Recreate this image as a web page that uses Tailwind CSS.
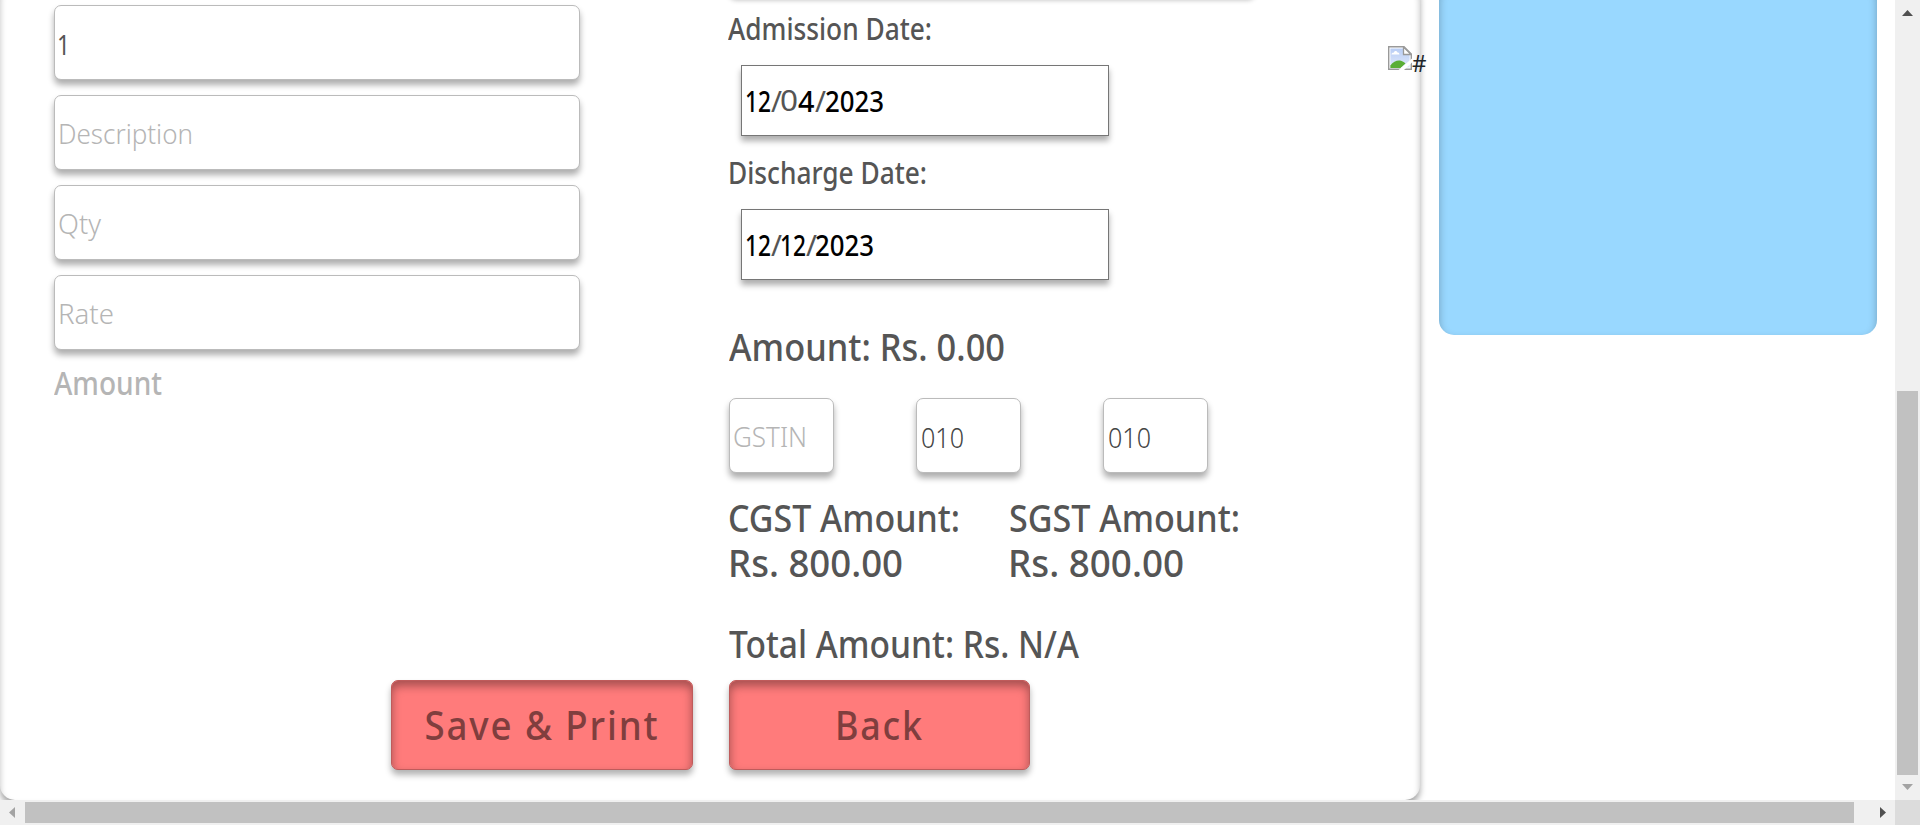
<!DOCTYPE html>
<html lang="en">
<head>
<meta charset="utf-8">
<title>Billing</title>
<script src="https://cdn.jsdelivr.net/npm/@tailwindcss/browser@4"></script>
</head>
<body class="h-[825px] w-[1920px] overflow-hidden bg-white font-['Noto_Sans','Open_Sans',sans-serif] text-[#555]">
<div class="grid h-[825px] grid-cols-[1895px_25px] grid-rows-[800px_25px]">

  <!-- page viewport -->
  <main class="flex overflow-hidden">
    <section class="relative -mt-5 flex h-[820px] w-[1420px] shrink-0 rounded-[15px] pt-5 shadow-[0_5px_6px_rgba(0,0,0,0.35),inset_0_5px_6px_rgba(0,0,0,0.25)]">

      <!-- item column -->
      <div class="flex w-[693px] shrink-0 flex-col pl-[54px] pt-[5px]">
        <div class="flex flex-col gap-[15px]">
          <div class="flex h-[75px] w-[526px] items-center rounded-[7px] border border-[#bbb] bg-white pl-[2px] pt-0.5 text-[28px] shadow-[0_5px_6px_rgba(0,0,0,0.32)]"><span data-w="13" class="inline-block origin-left whitespace-nowrap">1</span></div>
          <div class="flex h-[75px] w-[526px] items-center rounded-[7px] border border-[#bbb] bg-white pl-[3px] pt-1 text-[27px] font-light text-[#b5b5b5] shadow-[0_5px_6px_rgba(0,0,0,0.32)]"><span data-w="135" class="inline-block origin-left whitespace-nowrap">Description</span></div>
          <div class="flex h-[75px] w-[526px] items-center rounded-[7px] border border-[#bbb] bg-white pl-[3px] pt-1 text-[27px] font-light text-[#b5b5b5] shadow-[0_5px_6px_rgba(0,0,0,0.32)]"><span data-w="43" class="inline-block origin-left whitespace-nowrap">Qty</span></div>
          <div class="flex h-[75px] w-[526px] items-center rounded-[7px] border border-[#bbb] bg-white pl-[3px] pt-1 text-[27px] font-light text-[#b5b5b5] shadow-[0_5px_6px_rgba(0,0,0,0.32)]"><span data-w="56" class="inline-block origin-left whitespace-nowrap">Rate</span></div>
        </div>
        <div class="mt-[13px] text-[32px] font-medium leading-[40px] text-[#b5b5b5]"><span data-w="108" class="inline-block origin-left whitespace-nowrap">Amount</span></div>
        <button class="mt-[277px] h-[90px] w-[302px] self-end rounded-[7px] border border-[#bf5b5b] bg-[#ff7b7b] pt-px text-[39px] font-medium text-[#803e3e] shadow-[0_5px_6px_rgba(0,0,0,0.3),inset_0_5px_10px_rgba(0,0,0,0.35)]"><span data-w="235" class="-mx-4 inline-block origin-center whitespace-nowrap tracking-[2px]">Save &amp; Print</span></button>
      </div>

      <!-- billing column -->
      <div class="ml-9 flex w-[526px] shrink-0 flex-col">
        <div class="-mt-[80px] h-[75px] shrink-0 rounded-[7px] shadow-[0_5px_5px_rgba(0,0,0,0.27)]"></div>
        <div class="mt-[14px] text-[30px] font-medium leading-[40px]"><span data-w="204" class="-ml-px inline-block origin-left whitespace-nowrap">Admission Date:</span></div>
        <div class="ml-3 mt-4 flex h-[71px] w-[368px] items-center border border-[#767676] bg-white pl-[3px] pt-px text-[29px] font-medium text-black shadow-[0_5px_6px_rgba(0,0,0,0.32)]">
          <span data-w="26" class="inline-block w-[26px] origin-left whitespace-nowrap">12</span><span data-w="11" class="inline-block w-[9px] origin-left font-normal text-[#555]">/</span><span data-w="18" class="-mt-[2px] inline-block w-[18px] origin-left font-normal text-[#555]">0</span><span data-w="16.5" class="inline-block w-[17px] origin-left">4</span><span data-w="11" class="inline-block w-[10px] origin-left font-normal text-[#555]">/</span><span data-w="59" class="inline-block w-[60px] origin-left whitespace-nowrap">2023</span>
        </div>
        <div class="mt-[17px] text-[30px] font-medium leading-[40px]"><span data-w="199" class="-ml-px inline-block origin-left whitespace-nowrap">Discharge Date:</span></div>
        <div class="ml-3 mt-4 flex h-[71px] w-[368px] items-center border border-[#767676] bg-white pl-[3px] pt-px text-[29px] font-medium text-black shadow-[0_5px_6px_rgba(0,0,0,0.32)]">
          <span data-w="26" class="inline-block w-[26px] origin-left whitespace-nowrap">12</span><span data-w="11" class="inline-block w-[9px] origin-left font-normal text-[#555]">/</span><span data-w="26" class="inline-block w-[26px] origin-left whitespace-nowrap">12</span><span data-w="11" class="inline-block w-[9px] origin-left font-normal text-[#555]">/</span><span data-w="59" class="inline-block w-[60px] origin-left whitespace-nowrap">2023</span>
        </div>
        <div class="mt-[43px] text-[38px] font-medium leading-[46px]"><span data-w="276" class="inline-block origin-left whitespace-nowrap">Amount: Rs. 0.00</span></div>
        <div class="mt-[29px] flex gap-[82.5px]">
          <div class="flex h-[75px] w-[104.5px] items-center rounded-[7px] border border-[#bbb] bg-white pl-[3px] pt-1 text-[27px] font-light text-[#b5b5b5] shadow-[0_5px_6px_rgba(0,0,0,0.32)]"><span data-w="74" class="inline-block origin-left whitespace-nowrap">GSTIN</span></div>
          <div class="flex h-[75px] w-[104.5px] items-center rounded-[7px] border border-[#bbb] bg-white pl-[4px] pt-[3px] text-[28px] font-light text-[#444] shadow-[0_5px_6px_rgba(0,0,0,0.32)]"><span data-w="43" class="inline-block origin-left whitespace-nowrap">010</span></div>
          <div class="flex h-[75px] w-[104.5px] items-center rounded-[7px] border border-[#bbb] bg-white pl-[4px] pt-[3px] text-[28px] font-light text-[#444] shadow-[0_5px_6px_rgba(0,0,0,0.32)]"><span data-w="43" class="inline-block origin-left whitespace-nowrap">010</span></div>
        </div>
        <div class="mt-[22px] grid grid-cols-[280px_246px] text-[38px] font-medium leading-[45px]">
          <div class="-ml-px"><span data-w="232" class="inline-block origin-left whitespace-nowrap">CGST Amount:</span></div>
          <div><span data-w="231" class="inline-block origin-left whitespace-nowrap">SGST Amount:</span></div>
          <div class="-ml-px"><span data-w="175" class="inline-block origin-left whitespace-nowrap">Rs. 800.00</span></div>
          <div class="-ml-px"><span data-w="176" class="inline-block origin-left whitespace-nowrap">Rs. 800.00</span></div>
        </div>
        <div class="mt-9 text-[38px] font-medium leading-[45px]"><span data-w="350" class="inline-block origin-left whitespace-nowrap">Total Amount: Rs. N/A</span></div>
        <button class="mt-[14px] h-[90px] w-[301px] rounded-[7px] border border-[#bf5b5b] bg-[#ff7b7b] pt-px text-[39px] font-medium text-[#803e3e] shadow-[0_5px_6px_rgba(0,0,0,0.3),inset_0_5px_10px_rgba(0,0,0,0.35)]"><span data-w="89" class="inline-block origin-center whitespace-nowrap tracking-[2px]">Back</span></button>
      </div>

      <!-- missing image with its alt text, spilling over the panel edge -->
      <div class="absolute left-[1388px] top-[66px] flex items-start text-[#212529]">
        <svg class="h-6 w-6" viewBox="0 0 24 24" fill="none">
          <defs><linearGradient id="sky" x1="0" y1="0" x2="0" y2="1"><stop offset="0" stop-color="#b8cdf5"/><stop offset="1" stop-color="#e0e9fb"/></linearGradient></defs>
          <path d="M.7.7H16L23.3 8v15.300H.7z" fill="#fff" stroke="#999" stroke-width="1.4"/>
          <path d="M2.400 2.400H15V9h6.600v12.600H2.400z" fill="url(#sky)"/>
          <path d="M3.500 8.500c0-1.400 1.200-2 2.200-1.700C6.300 4.500 9 4.600 9.400 6.600c1.500-.2 2 .9 2 1.900z" fill="#fff"/>
          <path d="M2.400 22v-2.500C5 15.500 9 14 12 14.500c2.500.5 4 1.500 5.500 3L12.500 22z" fill="#5aae35"/>
          <path d="M15.500 1v7.500H23z" fill="#fff" stroke="#999" stroke-width="1.300"/>
          <path d="M24.500 12v4L15.500 24.500H10z" fill="#fff"/>
        </svg>
        <span data-w="14.500" class="mt-px inline-block origin-left text-[24px] leading-[32px]">#</span>
      </div>
    </section>

    <aside class="-mt-5 ml-[19px] h-[355px] w-[438px] shrink-0 rounded-[15px] bg-[#99d8ff] shadow-[inset_0_5px_8px_rgba(0,0,0,0.28)]"></aside>
  </main>

  <!-- vertical scrollbar -->
  <div class="flex flex-col items-center bg-[#f0f0f0]">
    <svg class="mt-[10px] h-[6px] w-[11px]" viewBox="0 0 11 6"><path d="M0 6L5.500 0L11 6z" fill="#505050"/></svg>
    <div class="mt-[375px] h-[384px] w-[21px] bg-[#c1c1c1]"></div>
    <svg class="mt-[9px] h-[6px] w-[11px]" viewBox="0 0 11 6"><path d="M0 0H11L5.500 6z" fill="#a3a3a3"/></svg>
  </div>

  <!-- horizontal scrollbar -->
  <div class="flex items-center bg-[#f0f0f0]">
    <svg class="ml-[9px] h-[11px] w-[6px]" viewBox="0 0 6 11"><path d="M6 0V11L0 5.500z" fill="#a3a3a3"/></svg>
    <div class="ml-[10px] h-[21px] w-[1829px] bg-[#c1c1c1]"></div>
    <svg class="ml-[26px] h-[11px] w-[6px]" viewBox="0 0 6 11"><path d="M0 0V11L6 5.500z" fill="#505050"/></svg>
  </div>
  <div class="bg-[#dcdcdc]"></div>
</div>
<script>
  // Condense each label horizontally to its design width.
  function fitLabels() {
    document.querySelectorAll('[data-w]').forEach(function (el) {
      el.style.transform = 'none';
      var range = document.createRange();
      range.selectNodeContents(el);
      el.style.transform = 'scaleX(' + (el.dataset.w / range.getBoundingClientRect().width) + ')';
    });
  }
  fitLabels();
  window.addEventListener('load', function () {
    fitLabels();
    requestAnimationFrame(fitLabels);
    setTimeout(fitLabels, 50);
  });
  document.fonts.ready.then(fitLabels);
</script>
</body>
</html>
